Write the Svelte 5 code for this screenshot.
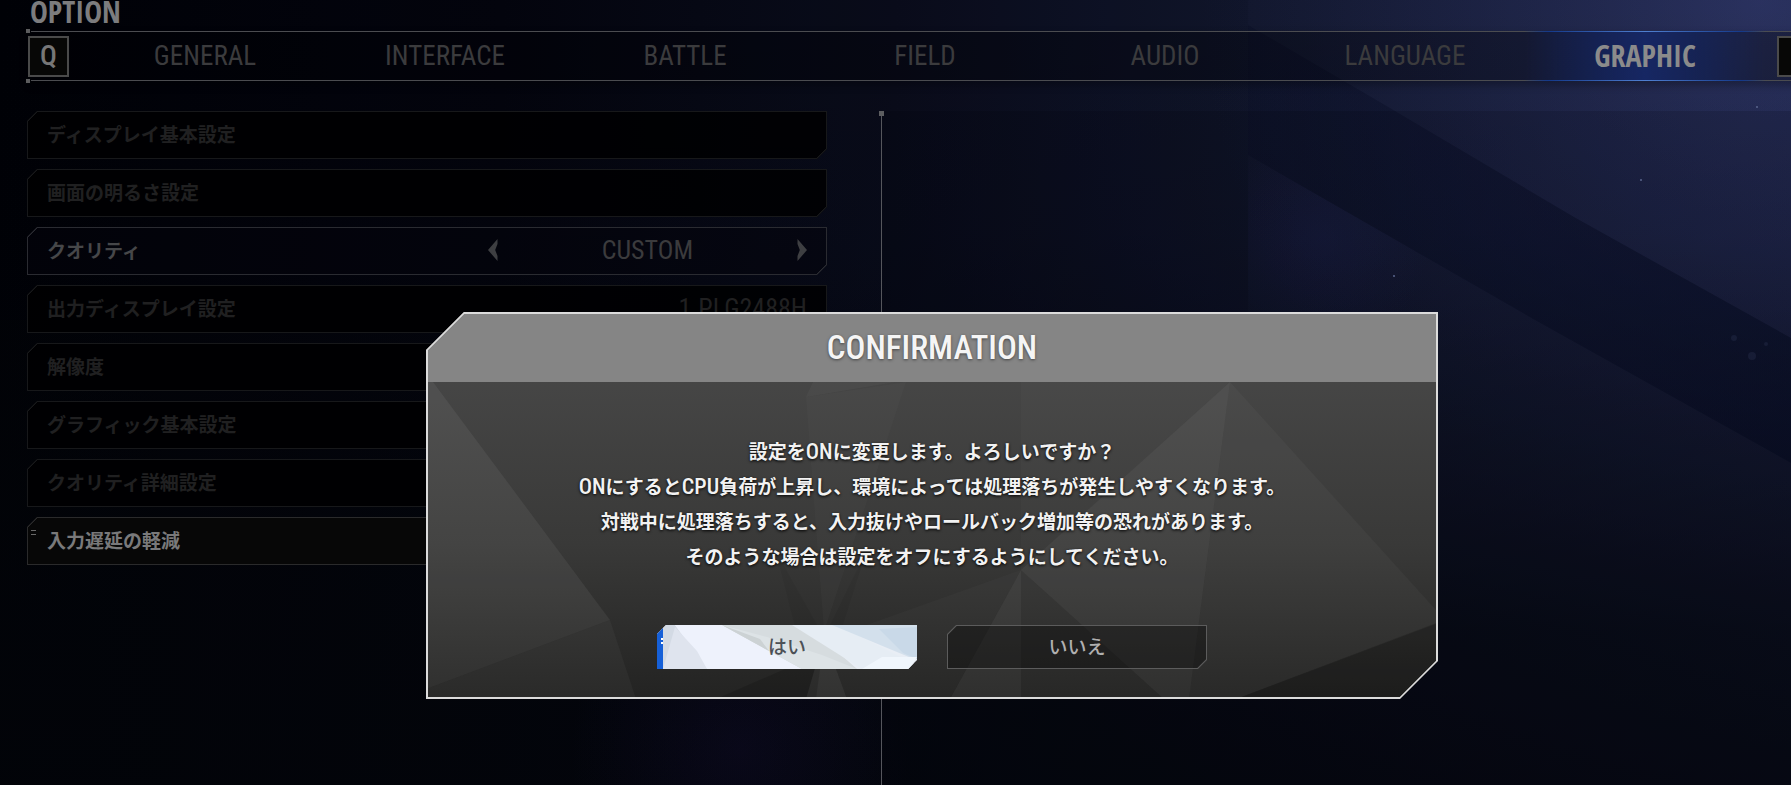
<script>
  const tabs = ['GENERAL', 'INTERFACE', 'BATTLE', 'FIELD', 'AUDIO', 'LANGUAGE', 'GRAPHIC'];
  const rows = [
    { label: 'ディスプレイ基本設定' },
    { label: '画面の明るさ設定' },
    { label: 'クオリティ', picker: 'CUSTOM' },
    { label: '出力ディスプレイ設定', value: '1.PLG2488H' },
    { label: '解像度' },
    { label: 'グラフィック基本設定' },
    { label: 'クオリティ詳細設定' },
    { label: '入力遅延の軽減', current: true }
  ];
  let activeTab = $state('GRAPHIC');
</script>

<div class="screen">
  <svg class="backdrop" viewBox="0 0 1791 785" preserveAspectRatio="none" aria-hidden="true">
    <defs>
      <linearGradient id="sky" x1="0" y1="0" x2="1" y2="0">
        <stop offset="0" stop-color="#010206" />
        <stop offset=".28" stop-color="#04050e" />
        <stop offset=".5" stop-color="#0a0d1c" />
        <stop offset=".7" stop-color="#12172d" />
        <stop offset="1" stop-color="#1d2344" />
      </linearGradient>
      <linearGradient id="fall" x1="0" y1="0" x2="0" y2="1">
        <stop offset="0" stop-color="#020409" stop-opacity="0" />
        <stop offset=".3" stop-color="#020409" stop-opacity=".1" />
        <stop offset=".6" stop-color="#020409" stop-opacity=".45" />
        <stop offset=".8" stop-color="#020409" stop-opacity=".7" />
        <stop offset="1" stop-color="#020409" stop-opacity=".8" />
      </linearGradient>
      <radialGradient id="corner" cx="1760" cy="0" r="560" gradientUnits="userSpaceOnUse">
        <stop offset="0" stop-color="#4a55a0" stop-opacity=".3" />
        <stop offset="1" stop-color="#2a3470" stop-opacity="0" />
      </radialGradient>
      <radialGradient id="glow" cx="1320" cy="240" r="110" gradientUnits="userSpaceOnUse">
        <stop offset="0" stop-color="#2a2a78" stop-opacity=".17" />
        <stop offset="1" stop-color="#2a2a78" stop-opacity="0" />
      </radialGradient>
      <radialGradient id="ember" cx="740" cy="750" r="170" gradientUnits="userSpaceOnUse">
        <stop offset="0" stop-color="#26185a" stop-opacity=".17" />
        <stop offset="1" stop-color="#26185a" stop-opacity="0" />
      </radialGradient>
      <linearGradient id="band" x1="1248" y1="80" x2="1791" y2="400" gradientUnits="userSpaceOnUse">
        <stop offset="0" stop-color="#050920" stop-opacity=".28" />
        <stop offset="1" stop-color="#040a20" stop-opacity=".5" />
      </linearGradient>
    </defs>
    <rect width="1791" height="785" fill="url(#sky)" />
    <rect width="1791" height="785" fill="url(#corner)" />
    <rect width="1791" height="785" fill="url(#fall)" />
    <polygon points="1248,25 1390,108 1574,217 1791,338 1791,463 1535,320 1248,155" fill="url(#band)" />
    <polygon points="1248,155 1535,320 1535,400 1248,400" fill="url(#glow)" />
    <rect width="1248" height="320" fill="#01020a" opacity=".08" />
    <rect x="400" y="560" width="700" height="225" fill="url(#ember)" />
    <rect x="882" y="111" width="909" height="674" fill="#00010a" opacity=".14" />
    <g fill="#5a668c">
      <circle cx="1757" cy="107" r="1" /><circle cx="1641" cy="180" r="1" /><circle cx="1394" cy="276" r="1" />
      <circle cx="1752" cy="356" r="4" opacity=".15" /><circle cx="1734" cy="338" r="3" opacity=".15" />
      <circle cx="1766" cy="344" r="2" opacity=".15" />
    </g>
  </svg>

  <header>
    <h1>OPTION</h1>
    <nav aria-label="OPTION">
      <kbd>Q</kbd>
      <div class="tabs">
        {#each tabs as tab}
          <button class="tab" class:active={tab === activeTab} onclick={() => (activeTab = tab)}>{tab}</button>
        {/each}
      </div>
      <kbd>E</kbd>
    </nav>
  </header>

  <main>
    <ul>
      {#each rows as row}
        <li>
          {#if row.picker}
            <div class="row lit">
              <span>{row.label}</span>
              <div class="picker">
                <button class="arrow" aria-label="前へ">
                  <svg viewBox="0 0 10 22" width="10" height="22"><path d="M9.500 0 0 11 9.500 22V17L7.200 11 9.500 5Z" fill="currentColor" /></svg>
                </button>
                <output>{row.picker}</output>
                <button class="arrow" aria-label="次へ">
                  <svg viewBox="0 0 10 22" width="10" height="22"><path d="M.5 0 10 11 .5 22V17L2.800 11 .5 5Z" fill="currentColor" /></svg>
                </button>
              </div>
            </div>
          {:else}
            <button class="row" class:current={row.current}>
              <span>{row.label}</span>
              {#if row.value}<span class="value">{row.value}</span>{/if}
            </button>
          {/if}
        </li>
      {/each}
    </ul>
    <section class="detail"></section>
  </main>

  <div class="veil">
    <div class="dialog" role="dialog" aria-modal="true" aria-labelledby="dialog-title">
      <h2 id="dialog-title">CONFIRMATION</h2>
      <div class="body">
        <svg class="facets" viewBox="0 0 1012 317" preserveAspectRatio="none" aria-hidden="true">
          <g fill="#fff">
            <polygon points="0,0 7,0 184,238 0,307" opacity=".06" />
            <polygon points="0,307 184,238 210,317 0,317" opacity=".035" />
            <polygon points="380,15 387,0 469,0" opacity=".03" />
            <polygon points="380,15 480,0 398,250" opacity=".02" />
            <polygon points="398,255 380,317 421,317" opacity=".07" />
            <polygon points="595,0 804,0 595,188" opacity=".02" />
            <polygon points="804,0 595,188 738,317 763,317" opacity=".06" />
            <polygon points="804,0 763,317 810,317 1010,241 1010,228" opacity=".03" />
            <polygon points="595,188 524,317 595,317" opacity=".06" />
            <polygon points="595,188 595,317 738,317" opacity=".02" />
            <polygon points="398,258 595,188 524,317 421,317" opacity=".02" />
          </g>
          <g fill="#000">
            <polygon points="210,317 290,317 398,270 398,258 390,317" opacity=".14" />
            <polygon points="350,170 398,255 374,265" opacity=".05" />
            <polygon points="440,170 398,255 410,265" opacity=".05" />
            <polygon points="1012,241 810,317 1012,317" opacity=".18" />
          </g>
        </svg>
        <p>
          設定を<b>ON</b>に変更します。よろしいですか？<br />
          <b>ON</b>にすると<b>CPU</b>負荷が上昇し、環境によっては処理落ちが発生しやすくなります。<br />
          対戦中に処理落ちすると、入力抜けやロールバック増加等の恐れがあります。<br />
          そのような場合は設定をオフにするようにしてください。
        </p>
        <div class="actions">
          <button class="choice yes">
            <svg viewBox="0 0 260 44" preserveAspectRatio="none" aria-hidden="true">
              <rect width="260" height="44" fill="#e9eef5" />
              <polygon points="6,0 18,0 50,44 6,44" fill="#d3dae4" />
              <polygon points="18,0 65,0 145,44 50,44 34,22" fill="#eef2fc" />
              <polygon points="18,2 40,26 50,44 6,44" fill="#dfe4ee" />
              <polygon points="65,0 150,0 200,44 145,44" fill="#d6dcdf" />
              <polygon points="65,0 110,12 165,30 200,44 145,44" fill="#dde3e6" />
              <polygon points="65,0 103,14 112,26" fill="#ccd2d4" />
              <polygon points="135,0 180,0 260,40 260,44 205,44" fill="#e6edf4" />
              <polygon points="175,0 260,0 260,34 252,32" fill="#d3e0ec" />
              <polygon points="222,4 260,2 260,34 246,28" fill="#c9d9e8" />
              <polygon points="260,32 252,44 205,44 225,32" fill="#f0f6fc" />
              <rect width="6" height="44" fill="#1660d8" />
              <path d="M4 13h2v2H4zM4 17h2v2H4z" fill="#fff" />
            </svg>
            <span>はい</span>
          </button>
          <button class="choice no"><span>いいえ</span></button>
        </div>
      </div>
    </div>
  </div>
</div>

<style>
  :global(body) { background: #010206; }
  .screen {
    --latin: "Roboto Condensed", "Noto Sans", sans-serif;
    --latin-bold: "Open Sans Condensed", "Noto Sans", sans-serif;
    --jp: "Noto Sans CJK JP", sans-serif;
    position: relative;
    min-height: 100vh;
    overflow: hidden;
    display: flex;
    flex-direction: column;
    font-family: var(--jp);
    color: #202021;
  }
  button {
    font: inherit;
    color: inherit;
    background: none;
    border: 0;
    padding: 0;
    cursor: pointer;
  }
  .backdrop {
    position: absolute;
    inset: 0;
    width: 100%;
    height: 100%;
  }
  header, main { position: relative; }
  h1 {
    margin: 0 0 0 30px;
    height: 31px;
    display: flex;
    align-items: flex-end;
    font: 700 30px/38px var(--latin-bold);
    color: #7c7c7e;
  }
  nav {
    position: relative;
    display: flex;
    align-items: center;
    height: 48px;
    margin: 0 -27px 0 28px;
    border: solid #4b4c50;
    border-width: 1px 0;
    background: rgba(0, 0, 4, .3);
    box-shadow: 0 4px 8px rgba(0, 0, 4, .3);
  }
  nav::before, nav::after {
    content: "";
    position: absolute;
    left: -2px;
    width: 4px;
    height: 4px;
    background: #5c5c5e;
    outline: 1px solid #010206;
  }
  nav::before { top: -3px; }
  nav::after { bottom: -3px; }
  kbd {
    box-sizing: border-box;
    flex: none;
    width: 41px;
    height: 41px;
    display: grid;
    place-items: center;
    border: 2px solid #4a4a4a;
    background: #070706;
    font: 500 28px/34px "Roboto Condensed", "Roboto", sans-serif;
    color: #777;
  }
  .tabs {
    flex: 1;
    display: grid;
    grid-template-columns: repeat(7, 1fr);
    height: 50px;
    margin: 0 12px 0 16px;
  }
  .tab {
    font: 400 27px/48px var(--latin);
    color: #3b3b3d;
    border: solid transparent;
    border-width: 1px 0;
  }
  .tab.active {
    font: 700 30px/48px var(--latin-bold);
    color: #8b8b8b;
    background: linear-gradient(90deg, transparent, rgba(18, 40, 110, .5) 30%, rgba(22, 46, 128, .6) 50%, rgba(18, 40, 110, .5) 70%, transparent);
    border-image: linear-gradient(90deg, transparent, #14398a 10%, #4f7fd0 50%, #14398a 90%, transparent) 1;
  }
  main {
    flex: 1;
    display: grid;
    grid-template-columns: 800px 1fr;
    gap: 54px;
    padding: 30px 0 0 27px;
  }
  ul {
    list-style: none;
    margin: 0;
    padding: 0;
    display: flex;
    flex-direction: column;
    gap: 10px;
  }
  .row, .choice {
    --cut: 10px;
    --edge: #17181a;
    --fill: rgba(0, 0, 1, .85);
    box-sizing: border-box;
    border: 1px solid var(--edge);
    clip-path: polygon(var(--cut) 0, 100% 0, 100% calc(100% - var(--cut)), calc(100% - var(--cut)) 100%, 0 100%, 0 var(--cut));
    background:
      linear-gradient(135deg, var(--edge) 8px, transparent 8px),
      linear-gradient(315deg, var(--edge) 8px, transparent 8px),
      var(--fill);
    background-origin: border-box;
  }
  .row {
    position: relative;
    display: flex;
    align-items: center;
    justify-content: space-between;
    width: 100%;
    height: 48px;
    padding: 0 19px 2px;
    font-size: 19px;
    line-height: 28px;
    font-weight: 700;
  }
  .row.lit {
    --edge: #2a2b31;
    --fill: rgba(3, 4, 12, .5);
    color: #464749;
  }
  .row.current {
    --edge: #2a2a2b;
    --fill: #070707;
    color: #79797a;
  }
  .row.current::before {
    content: "";
    position: absolute;
    left: 3px;
    top: 12px;
    width: 5px;
    height: 3px;
    border: solid #6a6a6a;
    border-width: 1px 0;
  }
  .value { font: 400 26px/34px var(--latin); }
  .picker {
    display: flex;
    align-items: center;
    justify-content: space-between;
    width: 42%;
    font: 400 26px/34px var(--latin);
    color: #3b3b3d;
  }
  .arrow { display: flex; color: #3e3f42; }
  .detail {
    position: relative;
    border-left: 1px solid #55565c;
    margin-top: 5px;
  }
  .detail::before {
    content: "";
    position: absolute;
    left: -3px;
    top: -5px;
    width: 5px;
    height: 5px;
    background: #5c5d60;
  }
  .veil {
    position: absolute;
    inset: 0;
    display: flex;
    justify-content: center;
    align-items: flex-start;
    padding: 312px 0 0 73px;
  }
  .dialog {
    --cut: 38px;
    --edge: #dcdcdc;
    position: relative;
    width: min(1012px, 90vw);
    clip-path: polygon(var(--cut) 0, 100% 0, 100% calc(100% - var(--cut)), calc(100% - var(--cut)) 100%, 0 100%, 0 var(--cut));
    background: linear-gradient(#4b4b4b, #393938 60%, #232322);
  }
  .dialog::after {
    content: "";
    position: absolute;
    inset: 0;
    border: 2px solid var(--edge);
    background:
      linear-gradient(135deg, var(--edge) 28px, transparent 29px),
      linear-gradient(315deg, var(--edge) 28px, transparent 29px);
    background-origin: border-box;
    pointer-events: none;
  }
  h2 {
    margin: 0;
    height: 70px;
    background: #858585;
    text-align: center;
    font: 500 33px/72px var(--latin);
    color: #f5f5f5;
    text-shadow: 0 1px 3px rgba(0, 0, 0, .5);
  }
  .body {
    position: relative;
    display: flex;
    flex-direction: column;
    align-items: center;
    gap: 52px;
    padding: 51px 24px 30px;
  }
  .facets {
    position: absolute;
    inset: 0;
    width: 100%;
    height: 100%;
  }
  p {
    position: relative;
    margin: 0;
    text-align: center;
    font-size: 19px;
    line-height: 35px;
    font-weight: 700;
    color: #f2f2f2;
    text-shadow: 0 1px 3px #000;
  }
  b {
    font: 500 22px/20px var(--latin);
  }
  .actions {
    position: relative;
    display: flex;
    gap: 30px;
  }
  .choice {
    --cut: 9px;
    --edge: #5c5c5c;
    --fill: rgba(10, 10, 10, .4);
    position: relative;
    width: 260px;
    height: 44px;
    padding-bottom: 2px;
    font-size: 19px;
    line-height: 28px;
    font-weight: 500;
    color: #b0b0b0;
  }
  .choice.no {
    background:
      linear-gradient(135deg, var(--edge) 7px, transparent 8px),
      linear-gradient(315deg, var(--edge) 7px, transparent 8px),
      var(--fill);
    background-origin: border-box;
  }
  .yes {
    border: 0;
    color: #4c5056;
  }
  .yes svg {
    position: absolute;
    inset: 0;
    width: 100%;
    height: 100%;
  }
  .yes span { position: relative; }
</style>
